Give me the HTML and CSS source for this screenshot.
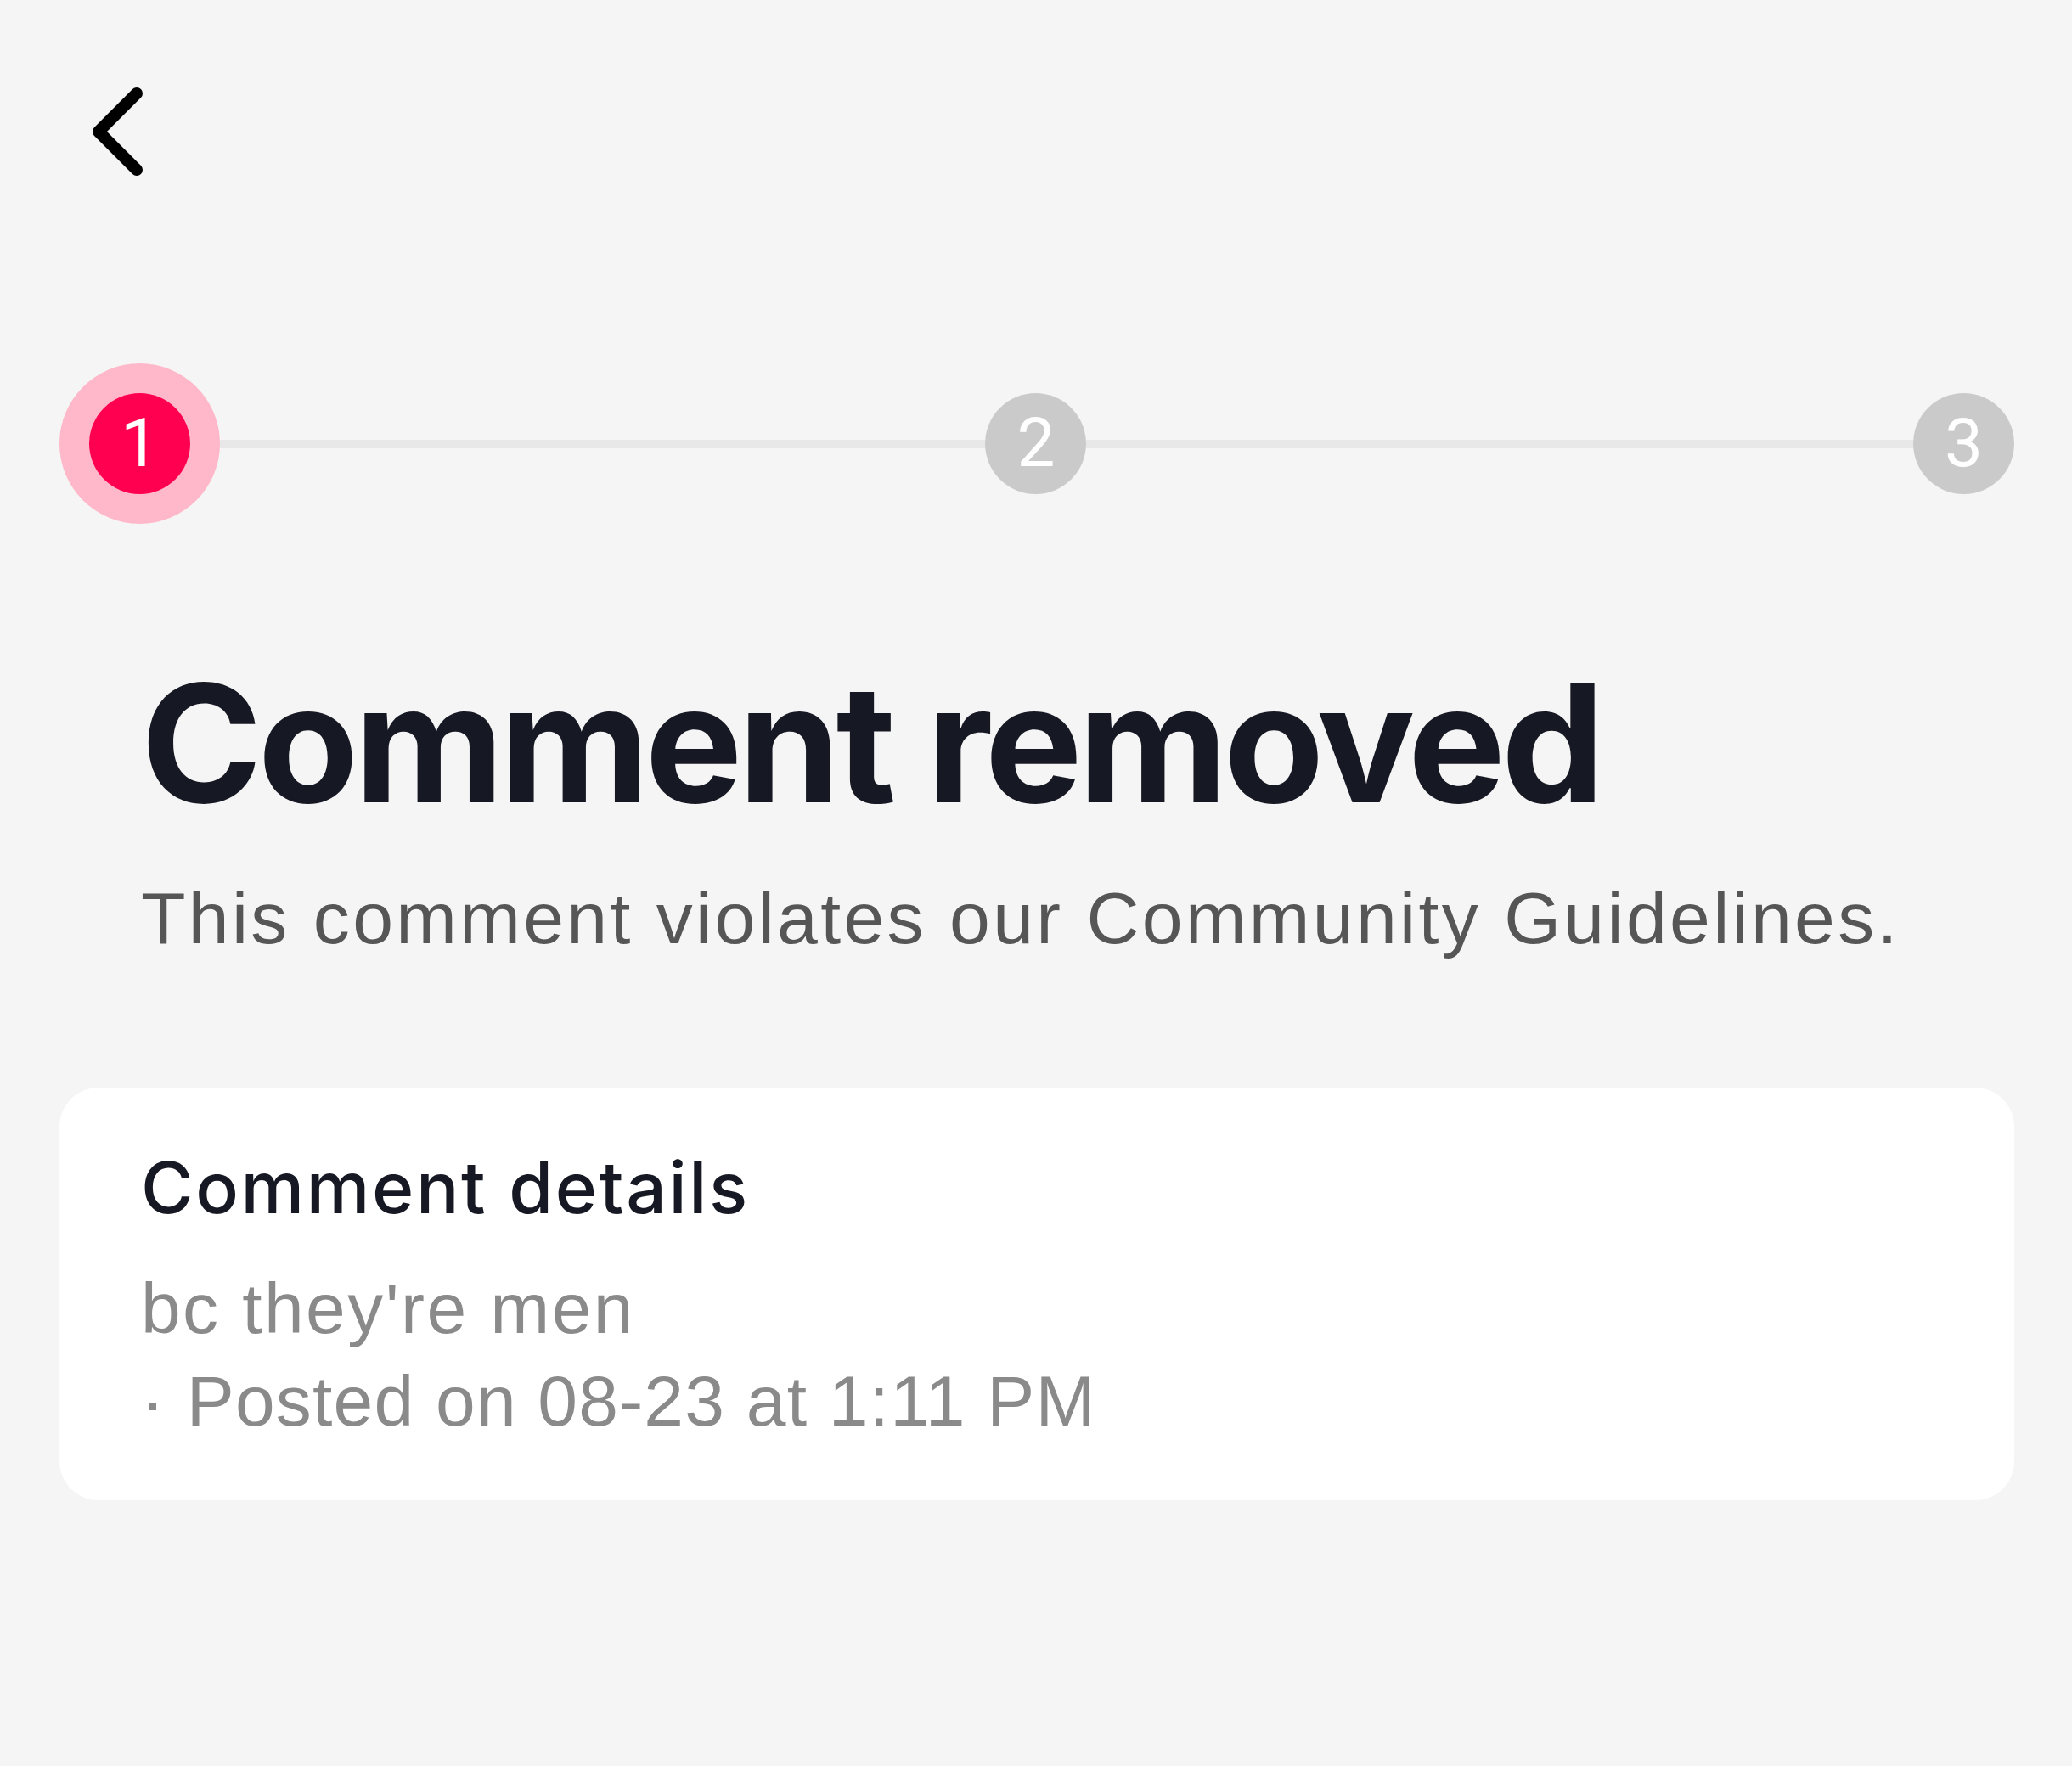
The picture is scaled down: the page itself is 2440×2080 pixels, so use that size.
FILE: index.html
```html
<!DOCTYPE html>
<html lang="en">
<head>
<meta charset="utf-8">
<title>Comment removed</title>
<link rel="stylesheet" href="styles.css">
</head>
<body>
<div class="page">
  <header class="topbar">
    <button class="back" aria-label="Back">
      <svg class="back-icon" width="80" height="120" viewBox="0 0 80 120">
        <path d="M61 14 L16 59 L61 104" fill="none" stroke="#000" stroke-width="14" stroke-linecap="round" stroke-linejoin="round"/>
      </svg>
    </button>
  </header>

  <div class="stepper">
    <div class="step-halo"><div class="step step-active">1</div></div>
    <div class="line line-a"></div>
    <div class="step">2</div>
    <div class="line line-b"></div>
    <div class="step">3</div>
  </div>

  <h1 class="title">Comment removed</h1>
  <p class="subtitle">This comment violates our Community Guidelines.</p>

  <section class="card">
    <h2 class="card-title">Comment details</h2>
    <p class="comment">bc they're men</p>
    <p class="meta">· Posted on 08-23 at 1:11 PM</p>
  </section>
</div>
</body>
</html>
```

FILE: styles.css
```css
html, body {
  margin: 0;
  padding: 0;
  background: #f5f5f5;
}

body {
  font-family: "Liberation Sans", Arial, sans-serif;
  color: #161823;
  width: 2440px;
  height: 2080px;
  overflow: hidden;
}

.page {
  padding: 0 68px 0 70px;
}

.topbar {
  padding-top: 96px;
  height: 120px;
  display: flex;
}

.back {
  margin-left: 30px;
  padding: 0;
  border: 0;
  background: none;
  width: 80px;
  height: 120px;
  display: block;
}

.back-icon {
  display: block;
}

.stepper {
  margin-top: 212px;
  height: 189px;
  display: flex;
  align-items: center;
}

.step-halo {
  width: 189px;
  height: 189px;
  border-radius: 50%;
  background: #ffb8c9;
  display: flex;
  align-items: center;
  justify-content: center;
  flex: none;
}

.step {
  width: 119px;
  height: 119px;
  border-radius: 50%;
  background: #cacaca;
  color: #fff;
  font-family: Roboto, sans-serif;
  font-weight: 400;
  font-size: 80px;
  line-height: 119px;
  text-align: center;
  flex: none;
}

.step-active {
  background: #ff0050;
}

.line {
  height: 10px;
  background: #e8e8e8;
  flex-basis: 0;
}

.line-a { flex-grow: 901; }
.line-b { flex-grow: 973; }

.title {
  margin: 158px 0 0 0;
  padding-left: 96px;
  font-family: Inter, sans-serif;
  font-weight: 700;
  font-size: 193px;
  line-height: 200px;
  color: #161823;
  letter-spacing: -5px;
}

.subtitle {
  margin: 51px 0 0 0;
  padding-left: 96px;
  font-size: 86px;
  line-height: 110px;
  letter-spacing: 3.3px;
  color: #565656;
}

.card {
  margin-top: 145px;
  background: #fff;
  border-radius: 46px;
  padding: 63px 96px 62px;
}

.card-title {
  margin: 0;
  font-family: Inter, sans-serif;
  font-size: 84px;
  line-height: 110px;
  font-weight: 500;
  letter-spacing: 2.6px;
  color: #161823;
}

.comment {
  margin: 33px 0 0 0;
  font-size: 84px;
  line-height: 109px;
  letter-spacing: 2.4px;
  color: #8a8a8a;
}

.meta {
  margin: 0;
  font-size: 84px;
  line-height: 109px;
  letter-spacing: 1.2px;
  color: #8a8a8a;
}
```
